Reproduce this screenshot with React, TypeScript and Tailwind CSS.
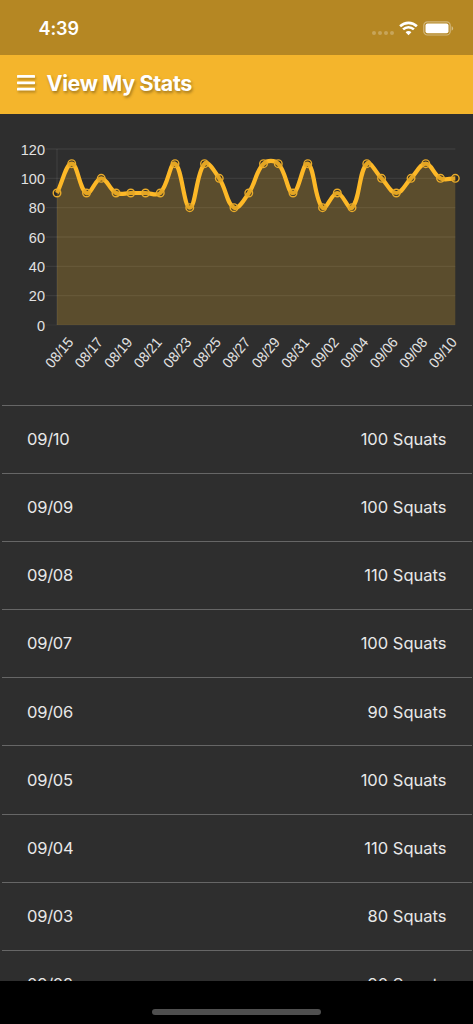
interface Entry {
	date: string
	squats: number
}

// Daily totals, oldest first
const entries: Entry[] = [
	{ date: "08/14", squats: 90 },
	{ date: "08/15", squats: 110 },
	{ date: "08/16", squats: 90 },
	{ date: "08/17", squats: 100 },
	{ date: "08/18", squats: 90 },
	{ date: "08/19", squats: 90 },
	{ date: "08/20", squats: 90 },
	{ date: "08/21", squats: 90 },
	{ date: "08/22", squats: 110 },
	{ date: "08/23", squats: 80 },
	{ date: "08/24", squats: 110 },
	{ date: "08/25", squats: 100 },
	{ date: "08/26", squats: 80 },
	{ date: "08/27", squats: 90 },
	{ date: "08/28", squats: 110 },
	{ date: "08/29", squats: 110 },
	{ date: "08/30", squats: 90 },
	{ date: "08/31", squats: 110 },
	{ date: "09/01", squats: 80 },
	{ date: "09/02", squats: 90 },
	{ date: "09/03", squats: 80 },
	{ date: "09/04", squats: 110 },
	{ date: "09/05", squats: 100 },
	{ date: "09/06", squats: 90 },
	{ date: "09/07", squats: 100 },
	{ date: "09/08", squats: 110 },
	{ date: "09/09", squats: 100 },
	{ date: "09/10", squats: 100 },
]

const ticks = [120, 100, 80, 60, 40, 20, 0]

const LEFT = 57
const RIGHT = 455.3
const TOP = 35
const BOTTOM = 211
const TENSION = 0.4

const points = entries.map((entry, i) => ({
	x: LEFT + (i * (RIGHT - LEFT)) / (entries.length - 1),
	y: toY(entry.squats),
}))

function toY(value: number) {
	return BOTTOM - (value / 120) * (BOTTOM - TOP)
}

// Control points before and after a point, weighted by the distance to its neighbours
function controls(i: number) {
	const cur = points[i]
	const prev = points[i - 1] ?? cur
	const next = points[i + 1] ?? cur
	const d1 = Math.hypot(cur.x - prev.x, cur.y - prev.y)
	const d2 = Math.hypot(next.x - cur.x, next.y - cur.y)
	const a = (TENSION * d1) / (d1 + d2)
	const b = (TENSION * d2) / (d1 + d2)
	return {
		before: { x: cur.x - a * (next.x - prev.x), y: cur.y - a * (next.y - prev.y) },
		after: { x: cur.x + b * (next.x - prev.x), y: cur.y + b * (next.y - prev.y) },
	}
}

const linePath = points
	.map((p, i) => {
		if (i === 0) return `M${p.x} ${p.y}`
		const c1 = controls(i - 1).after
		const c2 = controls(i).before
		return `C${c1.x} ${c1.y} ${c2.x} ${c2.y} ${p.x} ${p.y}`
	})
	.join(" ")

function StatusBar() {
	return (
		<div className="flex h-[55px] shrink-0 items-center justify-between bg-[#b58723] pr-[19px] pl-[38.5px] text-white">
			<span className="pt-[2px] text-[18px] leading-6 font-semibold tracking-[-0.1px]">4:39</span>
			<div className="flex items-center pt-[2px]">
				<div className="mt-[8px] mr-[5px] flex gap-[2px]">
					{[0, 1, 2, 3].map((dot) => (
						<span key={dot} className="size-[4px] rounded-full bg-white/25" />
					))}
				</div>
				<svg width="19" height="15" viewBox="0 0 19 15" fill="none" stroke="currentColor" strokeWidth="2.6">
					<path d="M1.1 5.3C5.9 0.7 13.1 0.7 17.9 5.3" />
					<path d="M4.1 8.4C7.2 5.5 11.8 5.5 14.9 8.4" />
					<path d="M9.5 14.2L6.6 11.3C8.2 9.7 10.8 9.7 12.4 11.3Z" fill="currentColor" stroke="none" />
				</svg>
				<svg className="ml-[5px]" width="31" height="15" viewBox="0 0 31 15">
					<rect x="0.8" y="0.8" width="26.4" height="13.2" rx="3.6" fill="none" stroke="white" strokeOpacity="0.4" strokeWidth="1.2" />
					<rect x="2.5" y="2.5" width="23" height="9.8" rx="2" fill="white" />
					<path d="M28.6 5.3C30.6 6 30.6 9 28.6 9.7Z" fill="white" fillOpacity="0.45" />
				</svg>
			</div>
		</div>
	)
}

function Header() {
	return (
		<header className="flex h-[59px] shrink-0 items-center bg-[#f4b52c] pl-[16.5px] text-white">
			<button type="button" aria-label="Menu" className="mr-[12px] mb-[3px] drop-shadow-[1px_2px_1px_rgba(0,0,0,0.25)]">
				<svg width="18" height="16" viewBox="0 0 18 16" fill="currentColor">
					<rect width="18" height="2.8" rx="0.6" />
					<rect y="6.4" width="18" height="2.8" rx="0.6" />
					<rect y="12.8" width="18" height="2.8" rx="0.6" />
				</svg>
			</button>
			<h1 className="pb-[3px] text-[21.5px] leading-7 font-bold tracking-[-0.38px] whitespace-nowrap [text-shadow:1px_2px_3px_rgba(0,0,0,0.35)]">
				View My Stats
			</h1>
		</header>
	)
}

function StatsChart() {
	return (
		<svg
			className="block shrink-0 font-['Liberation_Sans',Arial,sans-serif] text-[14.5px]"
			width="473"
			height="291"
			viewBox="0 0 473 291"
		>
			{ticks.map((tick) => (
				<g key={tick}>
					<line x1="46" x2={RIGHT} y1={toY(tick)} y2={toY(tick)} stroke="white" strokeOpacity={tick === 0 ? 0.03 : 0.07} strokeWidth="1.4" />
					<text x="45" y={toY(tick) + 5.5} textAnchor="end" fill="#e2e2e2">
						{tick}
					</text>
				</g>
			))}
			<line x1={LEFT} x2={LEFT} y1={TOP} y2={BOTTOM} stroke="white" strokeOpacity="0.07" strokeWidth="1.4" />
			<path d={`${linePath} L${RIGHT} ${BOTTOM} L${LEFT} ${BOTTOM} Z`} fill="#f4b52c" fillOpacity="0.23" />
			<path d={linePath} fill="none" stroke="#fdb827" strokeWidth="4.2" />
			{points.map((p, i) => (
				<circle
					key={entries[i].date}
					cx={p.x}
					cy={p.y}
					r="3.8"
					fill="black"
					fillOpacity="0.1"
					stroke="#e9ab2a"
					strokeWidth="1.4"
				/>
			))}
			{points.map((p, i) =>
				i % 2 === 1 ? (
					<text
						key={entries[i].date}
						transform={`translate(${p.x - 1.4} ${BOTTOM + 14.3}) rotate(-50)`}
						textAnchor="end"
						dominantBaseline="central"
						textLength="34.5"
						lengthAdjust="spacingAndGlyphs"
						fill="#e2e2e2"
					>
						{entries[i].date}
					</text>
				) : null,
			)}
		</svg>
	)
}

function EntryList() {
	return (
		<ul className="min-h-0 flex-1 overflow-hidden pr-px pl-[1.5px]">
			{[...entries].reverse().map((entry) => (
				<li
					key={entry.date}
					className="flex h-[68.1px] items-center justify-between border-t border-[#666666] pr-[25.5px] pl-[25.5px] text-[16.5px] text-[#e8e8e8]"
				>
					<span className="tracking-[-0.25px]">{entry.date}</span>
					<span>{entry.squats} Squats</span>
				</li>
			))}
		</ul>
	)
}

export default function App() {
	return (
		<div className="flex h-[1024px] w-[473px] flex-col overflow-hidden bg-[#2e2e2e] font-[Inter,sans-serif]">
			<StatusBar />
			<Header />
			<StatsChart />
			<EntryList />
			<div className="flex h-[43px] shrink-0 justify-center bg-black pt-[28px]">
				<div className="h-[6px] w-[169px] rounded-full bg-[#4f4f4f]" />
			</div>
		</div>
	)
}
